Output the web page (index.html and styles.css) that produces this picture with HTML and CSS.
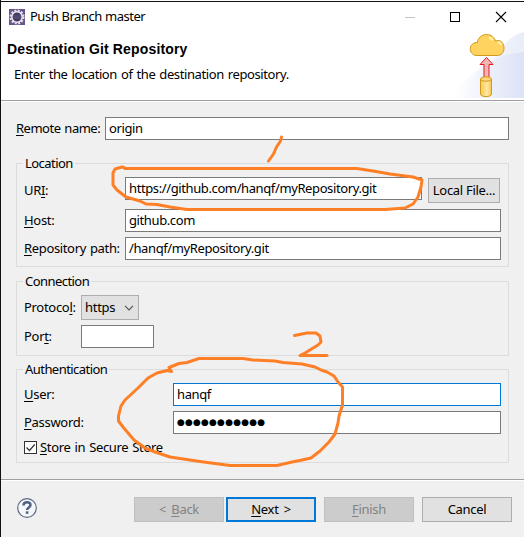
FILE: index.html
```html
<!DOCTYPE html>
<html lang="en">
<head>
<meta charset="utf-8">
<title>Push Branch master</title>
<link rel="stylesheet" href="styles.css">
</head>
<body>
<div class="window">
  <header class="banner">
    <div class="titlebar">
      <svg class="app-icon" width="16" height="16" viewBox="0 0 16 16">
        <rect width="16" height="16" fill="#66558c"/>
        <circle cx="8" cy="8" r="6.500" fill="none" stroke="#e4e0ea" stroke-width="2" stroke-dasharray="2 1.400"/>
        <circle cx="8" cy="8" r="5.200" fill="#42395e" stroke="#eeeaf2" stroke-width="1.500"/>
        <path d="M4 7h8M4 9h8" stroke="#6d6390" stroke-width=".8"/>
      </svg>
      <span class="caption">Push Branch master</span>
      <svg class="controls" width="104" height="12" viewBox="0 0 104 12" fill="none">
        <path d="M0 6.500h10" stroke="#c5c5c5"/>
        <rect x="45.500" y="1.500" width="9" height="9" stroke="#000"/>
        <path d="M91 1l10 10M101 1l-10 10" stroke="#000" stroke-width="1.100"/>
      </svg>
    </div>
    <div class="banner-text">
      <h1>Destination Git Repository</h1>
      <p>Enter the location of the destination repository.</p>
    </div>
    <svg class="art" width="75" height="66" viewBox="449 32 75 66">
      <defs>
        <linearGradient id="sky" x1="0" x2="1"><stop offset="0" stop-color="#fff"/><stop offset="1" stop-color="#e8edf9"/></linearGradient>
        <linearGradient id="sky2" x1="0" x2="1"><stop offset="0" stop-color="#e8edf9" stop-opacity="0"/><stop offset="1" stop-color="#dce3f6"/></linearGradient>
        <linearGradient id="can" x1="0" x2="1"><stop offset="0" stop-color="#fdc84c"/><stop offset=".6" stop-color="#ffe9a6"/><stop offset="1" stop-color="#fbc548"/></linearGradient>
      </defs>
      <path d="M450 98C464 78 480 67 496 57Q508 35 524 32V98Z" fill="url(#sky)"/>
      <path d="M462 98Q480 55 524 52V98Z" fill="url(#sky2)"/>
      <path d="M476 55.500a6.500 6.500 0 0 1 1.500-13c0-4 4-8 9-8s8 3 9 6.500c5-2 8.500 2 8.500 7s-3 7.500-7 7.500z" fill="#ffd35e" stroke="#d29a1c"/>
      <path d="M489 37.500q3 1 3.500 3M498 42q3 1 3 3" stroke="#fff0bd" stroke-width="2" fill="none"/>
      <path d="M486.500 57.500l6.500 7h-4v15h-5v-15h-4z" fill="#f7b5b5" stroke="#dc1e1e"/>
      <path d="M480.500 79v15c0 3.500 11 3.500 11 0v-15" fill="url(#can)" stroke="#d29a1c"/>
      <ellipse cx="486" cy="79" rx="5.500" ry="2.200" fill="#ffd979" stroke="#d29a1c"/>
    </svg>
  </header>

  <main class="content">
    <div class="row remote"><label><u>R</u>emote name:</label><div class="field">origin</div></div>

    <section class="group location">
      <h2>Location</h2>
      <div class="row uri"><label>UR<u>I</u>:</label><div class="field">https://github.com/hanqf/myRepository.git</div><div class="button file">Local File...</div></div>
      <div class="row host"><label><u>H</u>ost:</label><div class="field">github.com</div></div>
      <div class="row"><label class="repo"><u>R</u>epository path:</label><div class="field">/hanqf/myRepository.git</div></div>
    </section>

    <section class="group connection">
      <h2>Connection</h2>
      <div class="row protocol"><label>Protoco<u>l</u>:</label><div class="button combo"><span>https</span><svg width="10" height="6" viewBox="0 0 10 6"><path d="M1 .8l4 4 4-4" fill="none" stroke="#555" stroke-width="1.200"/></svg></div></div>
      <div class="row"><label>Por<u>t</u>:</label><div class="field port"></div></div>
    </section>

    <section class="group auth">
      <h2>Authentication</h2>
      <div class="row user"><label><u>U</u>ser:</label><div class="field focus">hanqf</div></div>
      <div class="row"><label><u>P</u>assword:</label><div class="field secret">●●●●●●●●●●●</div></div>
      <div class="check"><svg width="13" height="13" viewBox="0 0 13 13"><rect x=".5" y=".5" width="12" height="12" fill="#fff" stroke="#333"/><path d="M2.500 6.500l3 3 5.200-6" fill="none" stroke="#333" stroke-width="1.200"/></svg><span><u>S</u>tore in Secure Store</span></div>
    </section>
  </main>

  <footer class="buttons">
    <svg class="help" width="20" height="20" viewBox="0 0 20 20" fill="none">
      <circle cx="10" cy="10" r="9.300" fill="#f5f6f8" stroke="#5d6b86" stroke-width="1.200"/>
      <path d="M6.500 7.500c0-4.300 7-4.300 7-.5 0 2.500-3.400 2.500-3.400 5" stroke="#4f6080" stroke-width="2.500"/>
      <path d="M8.800 13.300h2.600v2.500H8.800z" fill="#4f6080"/>
    </svg>
    <div class="button disabled"><span>&lt; <u>B</u>ack</span></div>
    <div class="button default"><span><u>N</u>ext &gt;</span></div>
    <div class="button disabled finish"><span><u>F</u>inish</span></div>
    <div class="button cancel">Cancel</div>
  </footer>

  <svg class="ink" width="524" height="537" viewBox="0 0 524 537">
    <path d="M281.500 137l-1 4-4 6-3 7-5 7"/>
    <path d="M125 168L122 167 115 169 113 173V185L117 190 126 197 140 201 146 204 157 204.500 170 207 187 209.500H385L405 208 413 204 418 197 421 187 422 180 413 177 390 174 376 171.500 357 168.500H125"/>
    <path d="M294.500 335.500L307 333H316L320 336 321 342 318 345 305 353 300 355.500H327"/>
    <path d="M171.500 371.500L169 367.500 179 363.500 187 362.500 199 358.500H243L253 360 275 361 283 362.500 302 364 315 367 321 370 327 372 334 376 338 382 342.500 387V405L339 416 338 423 335 434 329 442 320 451 311 458 302 460 292 462 277 465.500H230L200 461.500 170 457 155 452 145 448 134 440 123 427 118.500 421V416L121 406 125 400 138 388 148 378 157 373 167 370.500Z"/>
  </svg>
</div>
</body>
</html>
```
FILE: styles.css
```css
* { box-sizing: border-box; }
body { margin: 0; font: 13px/17px "Noto Sans", "Open Sans", sans-serif; color: #000; background: #fff; }
h1, h2, p { margin: 0; font-weight: normal; }
u { text-decoration: underline; text-underline-offset: 2px; text-decoration-thickness: 1px; text-decoration-skip-ink: none; }
.window { position: relative; width: 524px; height: 537px; overflow: hidden; border-left: 1px solid #111; background: #f0f0f0; display: flex; flex-direction: column; }
.banner { position: relative; height: 101px; background: #fff; border-bottom: 1px solid #a0a0a0; flex: none; }
.titlebar { height: 30px; margin-top: 1px; border-top: 1px solid #111; display: flex; align-items: center; padding: 0 15px 0 8px; }
.caption { margin-left: 5px; letter-spacing: -.5px; word-spacing: .5px; }
.controls { margin-left: auto; }
.banner-text { padding: 10px 0 0 6px; }
h1 { font: bold 14px/17px "Liberation Sans", sans-serif; letter-spacing: .15px; }
.banner-text p { margin: 8px 0 0 7px; letter-spacing: -.4px; word-spacing: 1px; }
.art { position: absolute; right: 0; bottom: 2px; }
.content { height: 378px; padding: 15px 15px 0; border-top: 1px solid #fff; flex: none; }
.row { display: flex; align-items: center; height: 23px; }
.row label { flex: none; white-space: nowrap; letter-spacing: -.3px; }
.row .repo { letter-spacing: -.35px; word-spacing: 1px; }
.field { flex: 1; height: 23px; border: 1px solid #7a7a7a; background: #fff; padding: 2px 3px; white-space: nowrap; letter-spacing: -.39px; }
.remote label { width: 89px; letter-spacing: -.5px; word-spacing: 1px; }
.group { position: relative; border: 1px solid #dcdcdc; padding: 13px 7px 0; width: 493px; }
.group h2 { position: absolute; left: 6px; top: -9px; padding: 0 2px; background: #f0f0f0; font-size: 13px; letter-spacing: -.55px; }
.location { height: 104px; margin-top: 23px; }
.location label { width: 101px; }
.uri { height: 26px; align-items: flex-start; }
.uri label { padding-top: 5px; }
.host { margin: 6px 0 5px; }
.button { height: 25px; background: #e1e1e1; border: 1px solid #adadad; display: flex; align-items: center; justify-content: center; white-space: nowrap; letter-spacing: -.3px; }
.file { width: 72px; margin: 1px 1px 0 6px; }
.connection { height: 75px; margin-top: 14px; }
.connection label { width: 57px; }
.protocol { height: 25px; margin-bottom: 5px; }
.combo { width: 58px; justify-content: space-between; padding: 0 4px 0 3px; }
.port { flex: none; width: 73px; }
.auth { height: 94px; margin-top: 13px; }
.auth label { width: 149px; }
.user { margin-bottom: 5px; }
.focus { border-color: #0078d7; }
.secret { font: 9px/17px "DejaVu Sans", sans-serif; letter-spacing: .17px; }
.check { display: flex; align-items: center; height: 17px; margin-top: 5px; }
.check span { margin-left: 3px; letter-spacing: -.35px; word-spacing: 1px; }
.buttons { flex: 1; border-top: 1px solid #a0a0a0; box-shadow: inset 0 1px #fff; display: flex; padding: 17px 11px 0 16px; }
.help { margin: 1px 97px 0 0; }
.buttons .button { width: 90px; flex: none; word-spacing: 2px; }
.buttons .disabled { background: #ccc; border-color: #bfbfbf; color: #838383; }
.buttons .default { margin-left: 2px; border: 2px solid #0078d7; }
.buttons .finish, .buttons .cancel { margin-left: 8px; }
.ink { position: absolute; left: -1px; top: 0; fill: none; stroke: #ff7f27; stroke-width: 3; stroke-linecap: round; stroke-linejoin: round; pointer-events: none; }
```
